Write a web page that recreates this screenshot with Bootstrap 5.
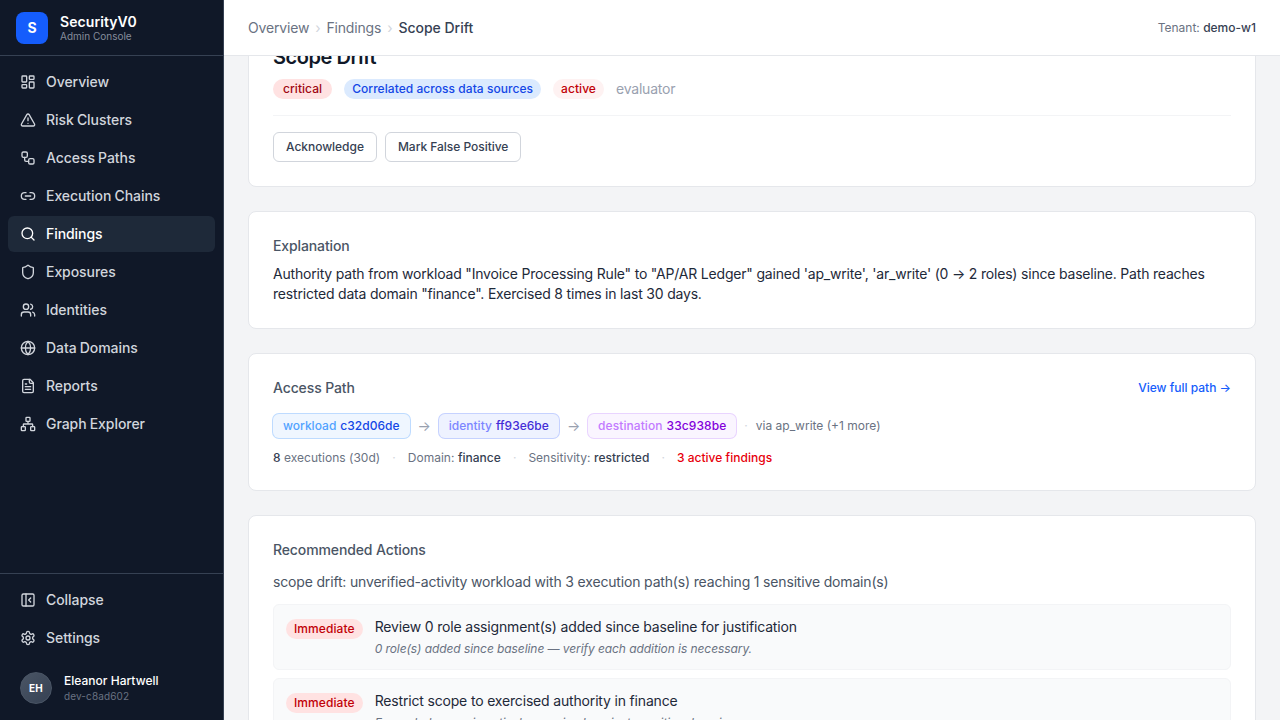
<!DOCTYPE html>
<html lang="en">
<head>
<meta charset="utf-8">
<meta name="viewport" content="width=device-width, initial-scale=1">
<title>Scope Drift · SecurityV0</title>
<link href="https://cdn.jsdelivr.net/npm/bootstrap@5.3.0/dist/css/bootstrap.min.css" rel="stylesheet">
<style>
:root{--med:500}
body{font-family:Inter,"Liberation Sans",sans-serif;font-size:14px;line-height:20px;letter-spacing:-.17px;color:#101828;background:#f3f4f6}
a{text-decoration:none}
.side{width:224px;background:#101828;border-right:1px solid #364153}
.brand{height:56px;border-bottom:1px solid #364153;padding:0 16px;gap:12px}
.logo-box{width:32px;height:32px;border-radius:8px;background:#155dfc;font-weight:700}
.brand-name{font-weight:600;line-height:17.5px;letter-spacing:.08px}
.brand-sub{font-size:10px;line-height:12.5px;letter-spacing:0;color:#858d9c}
.side .nav{gap:2px;padding:8px}
.side .nav-link{height:36px;padding:0 12px;gap:10px;border-radius:6px;color:#d1d5dc;font-weight:var(--med);letter-spacing:-.06px;word-spacing:-.5px;display:flex;align-items:center}
.side .nav-link.active{background:#1e2939;color:#fff}
svg.ico{width:16px;height:16px;flex:none;fill:none;stroke:currentColor;stroke-width:2;stroke-linecap:round;stroke-linejoin:round}
.side-foot{border-top:1px solid #364153}
.user-row{padding:8px 20px 16px;gap:12px}
.user-name{font-size:12px;line-height:16px;font-weight:var(--med);letter-spacing:.02px}
.user-id{font-size:10px;line-height:15px;letter-spacing:.13px;color:#6a7282}
.avatar{width:32px;height:32px;background:linear-gradient(135deg,#4a5565,#364153);border:1px solid #4a5565;color:#fff;font-size:10px;font-weight:700;letter-spacing:.25px}
.topbar{height:56px;background:#fff;border-bottom:1px solid #e5e7eb;padding:0 24px;color:#6a7282}
.crumbs{gap:6px}
.crumbs i{font-style:normal;font-size:14px;color:#d1d5dc}
.crumbs .dk{letter-spacing:-.02px}
.tenant{font-size:12px;line-height:16px;letter-spacing:0}
.dk{color:#364153;font-weight:var(--med)}
.view{padding:0 24px}
.stack{gap:24px;margin-top:-38px}
.panel{background:#fff;border:1px solid #e5e7eb;border-radius:8px;padding:24px}
.page-h{font-size:20px;line-height:28px;font-weight:600;letter-spacing:-.45px;margin:0 0 8px}
.tag-row{gap:12px;color:#99a1af;letter-spacing:-.2px}
.pill{font-size:12px;line-height:16px;font-weight:var(--med);letter-spacing:.05px;padding:2px 10px;border-radius:99px;display:inline-block}
.pill.slim{padding:2px 8px}
.crit{background:#ffe2e2;color:#9f0712}
.corr{background:#dbeafe;color:#1447e6}
.actv{background:#fef2f2;color:#c10007}
.immed{background:#ffe2e2;color:#c10007;margin-top:2px;letter-spacing:.08px}
.act-row{border-top:1px solid #f3f4f6;margin-top:16px;padding-top:16px}
.btn-line{font-size:12px;line-height:16px;font-weight:var(--med);padding:6px 12px;border:1px solid #d1d5dc;border-radius:6px;color:#364153;background:#fff;letter-spacing:-.03px}
.sec-h{font-size:14px;line-height:20px;font-weight:var(--med);letter-spacing:-.12px;color:#4a5565;margin:0}
.body-t{color:#1e2939;margin:8px 0 0}
.explain{letter-spacing:-.195px}
.small-t{font-size:12px;line-height:16px;letter-spacing:0;color:#6a7282}
.full-link{color:#155dfc;font-weight:var(--med)}
.alert-t{color:#e7000b;font-weight:var(--med)}
.path-row{margin-top:16px;gap:8px}
.meta-row{margin-top:12px;gap:12px;letter-spacing:.025px}
.node{font-size:12px;line-height:16px;font-weight:var(--med);letter-spacing:.02px;padding:4px 10px;border-radius:6px}
.n-w{background:#eff6ff;box-shadow:0 0 0 1px #bedbff;color:#1447e6}.n-w span{color:#51a2ff}
.n-i{background:#eef2ff;box-shadow:0 0 0 1px #c6d2ff;color:#432dd7}.n-i span{color:#7c86ff}
.n-d{background:#faf5ff;box-shadow:0 0 0 1px #e9d4ff;color:#8200db;letter-spacing:.08px}.n-d span{color:#c27aff}
.node span{margin-right:4px}
.arr{font-size:14px;color:#99a1af;line-height:20px}
.dotsep{color:#d1d5dc}
.summary{color:#4a5565;margin:12px 0}
.action-item{background:#f9fafb;border:1px solid #f3f4f6;border-radius:6px;padding:12px;gap:12px}
.why{font-size:12px;line-height:16px;letter-spacing:-.07px;font-style:italic;color:#6a7282;margin-top:4px}
</style>
</head>
<body>
<div class="d-flex vh-100 overflow-hidden">
  <aside class="side d-flex flex-column flex-shrink-0">
    <div class="brand d-flex align-items-center text-white flex-shrink-0">
      <div class="logo-box d-flex align-items-center justify-content-center">S</div>
      <div><div class="brand-name">SecurityV0</div><div class="brand-sub">Admin Console</div></div>
    </div>
    <nav class="nav flex-column flex-nowrap flex-grow-1">
      <a class="nav-link" href="#"><svg class="ico" viewBox="0 0 24 24"><rect width="7" height="9" x="3" y="3" rx="1"/><rect width="7" height="5" x="14" y="3" rx="1"/><rect width="7" height="9" x="14" y="12" rx="1"/><rect width="7" height="5" x="3" y="16" rx="1"/></svg>Overview</a>
      <a class="nav-link" href="#"><svg class="ico" viewBox="0 0 24 24"><path d="m21.73 18-8-14a2 2 0 0 0-3.48 0l-8 14A2 2 0 0 0 4 21h16a2 2 0 0 0 1.73-3"/><path d="M12 9v4M12 17h.01"/></svg>Risk Clusters</a>
      <a class="nav-link" href="#"><svg class="ico" viewBox="0 0 24 24"><rect width="8" height="8" x="3" y="3" rx="2"/><path d="M7 11v4a2 2 0 0 0 2 2h4"/><rect width="8" height="8" x="13" y="13" rx="2"/></svg>Access Paths</a>
      <a class="nav-link" href="#"><svg class="ico" viewBox="0 0 24 24"><path d="M9 17H7A5 5 0 0 1 7 7h2M15 7h2a5 5 0 1 1 0 10h-2M8 12h8"/></svg>Execution Chains</a>
      <a class="nav-link active" href="#"><svg class="ico" viewBox="0 0 24 24"><path d="m21 21-4.34-4.34"/><circle cx="11" cy="11" r="8"/></svg>Findings</a>
      <a class="nav-link" href="#"><svg class="ico" viewBox="0 0 24 24"><path d="M20 13c0 5-3.5 7.5-7.66 8.95a1 1 0 0 1-.67-.01C7.5 20.5 4 18 4 13V6a1 1 0 0 1 1-1c2 0 4.500-1.200 6.240-2.720a1.170 1.170 0 0 1 1.520 0C14.510 3.810 17 5 19 5a1 1 0 0 1 1 1z"/></svg>Exposures</a>
      <a class="nav-link" href="#"><svg class="ico" viewBox="0 0 24 24"><path d="M16 21v-2a4 4 0 0 0-4-4H6a4 4 0 0 0-4 4v2M16 3.128a4 4 0 0 1 0 7.744M22 21v-2a4 4 0 0 0-3-3.870"/><circle cx="9" cy="7" r="4"/></svg>Identities</a>
      <a class="nav-link" href="#"><svg class="ico" viewBox="0 0 24 24"><circle cx="12" cy="12" r="10"/><path d="M12 2a14.500 14.500 0 0 0 0 20 14.500 14.500 0 0 0 0-20M2 12h20"/></svg>Data Domains</a>
      <a class="nav-link" href="#"><svg class="ico" viewBox="0 0 24 24"><path d="M15 2H6a2 2 0 0 0-2 2v16a2 2 0 0 0 2 2h12a2 2 0 0 0 2-2V7Z"/><path d="M14 2v4a2 2 0 0 0 2 2h4M10 9H8M16 13H8M16 17H8"/></svg>Reports</a>
      <a class="nav-link" href="#"><svg class="ico" viewBox="0 0 24 24"><rect x="16" y="16" width="6" height="6" rx="1"/><rect x="2" y="16" width="6" height="6" rx="1"/><rect x="9" y="2" width="6" height="6" rx="1"/><path d="M5 16v-3a1 1 0 0 1 1-1h12a1 1 0 0 1 1 1v3M12 12V8"/></svg>Graph Explorer</a>
    </nav>
    <div class="side-foot">
      <div class="nav flex-column">
        <a class="nav-link" href="#"><svg class="ico" viewBox="0 0 24 24"><rect width="18" height="18" x="3" y="3" rx="2"/><path d="M9 3v18M16 15l-3-3 3-3"/></svg>Collapse</a>
        <a class="nav-link" href="#"><svg class="ico" viewBox="0 0 24 24"><path d="M12.220 2h-.44a2 2 0 0 0-2 2v.18a2 2 0 0 1-1 1.730l-.43.25a2 2 0 0 1-2 0l-.15-.08a2 2 0 0 0-2.730.73l-.22.38a2 2 0 0 0 .73 2.730l.15.1a2 2 0 0 1 1 1.720v.51a2 2 0 0 1-1 1.740l-.15.09a2 2 0 0 0-.73 2.730l.22.38a2 2 0 0 0 2.730.73l.15-.08a2 2 0 0 1 2 0l.43.25a2 2 0 0 1 1 1.730V20a2 2 0 0 0 2 2h.44a2 2 0 0 0 2-2v-.18a2 2 0 0 1 1-1.730l.43-.25a2 2 0 0 1 2 0l.15.08a2 2 0 0 0 2.730-.73l.22-.39a2 2 0 0 0-.73-2.730l-.15-.08a2 2 0 0 1-1-1.740v-.5a2 2 0 0 1 1-1.740l.15-.09a2 2 0 0 0 .73-2.730l-.22-.38a2 2 0 0 0-2.730-.73l-.15.08a2 2 0 0 1-2 0l-.43-.25a2 2 0 0 1-1-1.730V4a2 2 0 0 0-2-2z"/><circle cx="12" cy="12" r="3"/></svg>Settings</a>
      </div>
      <div class="user-row d-flex align-items-center">
        <div class="avatar rounded-circle d-flex align-items-center justify-content-center">EH</div>
        <div><div class="user-name text-white">Eleanor Hartwell</div><div class="user-id">dev-c8ad602</div></div>
      </div>
    </div>
  </aside>
  <div class="d-flex flex-column flex-grow-1">
    <header class="topbar d-flex align-items-center justify-content-between flex-shrink-0">
      <div class="crumbs d-flex align-items-center"><span>Overview</span><i>›</i><span>Findings</span><i>›</i><span class="dk">Scope Drift</span></div>
      <div class="tenant">Tenant: <span class="dk">demo-w1</span></div>
    </header>
    <main class="view flex-grow-1 overflow-hidden">
      <div class="stack d-flex flex-column">
        <section class="panel">
          <h1 class="page-h">Scope Drift</h1>
          <div class="tag-row d-flex align-items-center">
            <span class="pill crit">critical</span><span class="pill slim corr">Correlated across data sources</span><span class="pill slim actv">active</span><span>evaluator</span>
          </div>
          <div class="act-row d-flex gap-2">
            <button class="btn-line">Acknowledge</button><button class="btn-line">Mark False Positive</button>
          </div>
        </section>
        <section class="panel">
          <h2 class="sec-h">Explanation</h2>
          <p class="body-t explain">Authority path from workload "Invoice Processing Rule" to "AP/AR Ledger" gained 'ap_write', 'ar_write' (0 → 2 roles) since baseline. Path reaches restricted data domain "finance". Exercised 8 times in last 30 days.</p>
        </section>
        <section class="panel">
          <div class="d-flex justify-content-between align-items-center">
            <h2 class="sec-h">Access Path</h2>
            <a href="#" class="small-t full-link">View full path →</a>
          </div>
          <div class="path-row d-flex align-items-center">
            <div class="node n-w"><span>workload</span>c32d06de</div><div class="arr">→</div>
            <div class="node n-i"><span>identity</span>ff93e6be</div><div class="arr">→</div>
            <div class="node n-d"><span>destination</span>33c938be</div>
            <span class="small-t dotsep">·</span><span class="small-t">via ap_write (+1 more)</span>
          </div>
          <div class="meta-row small-t d-flex">
            <span><span class="dk">8</span> executions (30d)</span><span class="dotsep">·</span><span>Domain: <span class="dk">finance</span></span><span class="dotsep">·</span><span>Sensitivity: <span class="dk">restricted</span></span><span class="dotsep">·</span><span class="alert-t">3 active findings</span>
          </div>
        </section>
        <section class="panel">
          <h2 class="sec-h">Recommended Actions</h2>
          <p class="summary">scope drift: unverified-activity workload with 3 execution path(s) reaching 1 sensitive domain(s)</p>
          <div class="d-flex flex-column gap-2">
            <div class="action-item d-flex align-items-start"><span class="pill slim immed">Immediate</span><div><div class="body-t m-0">Review 0 role assignment(s) added since baseline for justification</div><div class="why">0 role(s) added since baseline — verify each addition is necessary.</div></div></div>
            <div class="action-item d-flex align-items-start"><span class="pill slim immed">Immediate</span><div><div class="body-t m-0">Restrict scope to exercised authority in finance</div><div class="why">Expanded scope is actively exercised against sensitive domains.</div></div></div>
          </div>
        </section>
      </div>
    </main>
  </div>
</div>
<script src="https://cdn.jsdelivr.net/npm/bootstrap@5.3.0/dist/js/bootstrap.bundle.min.js"></script>
</body>
</html>
